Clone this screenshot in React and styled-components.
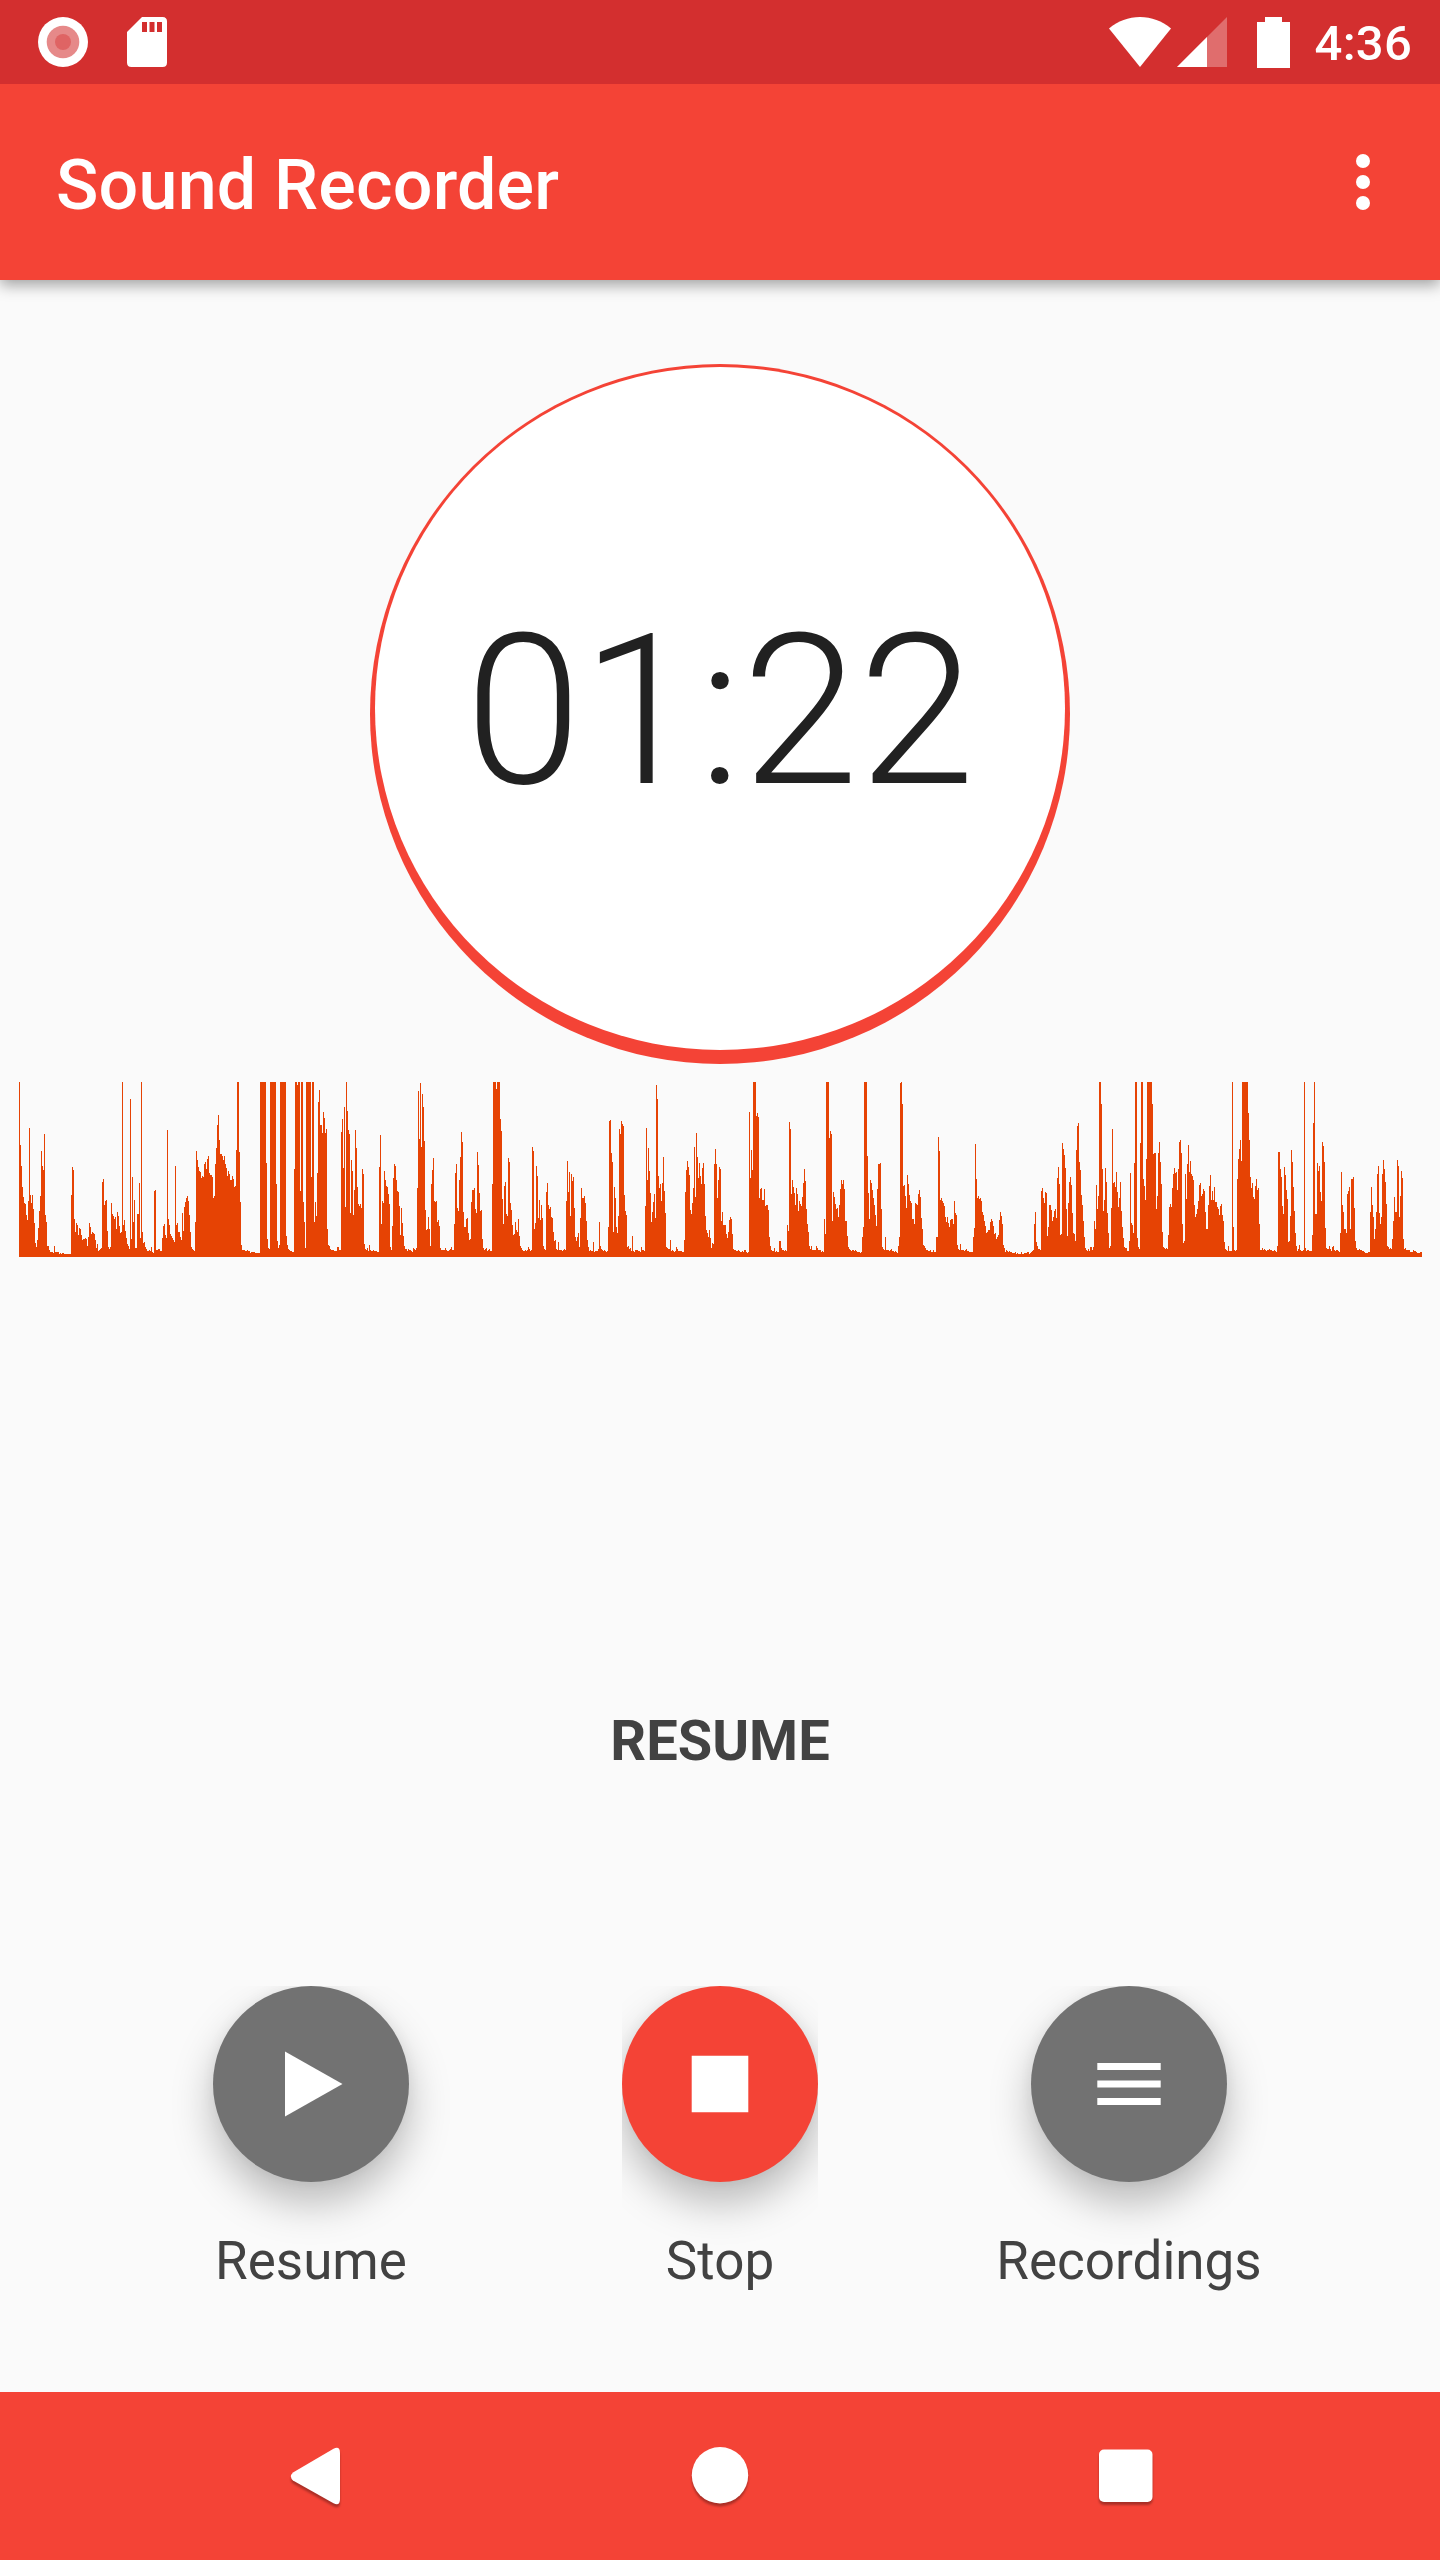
import React from 'react';
import styled, { createGlobalStyle } from 'styled-components';

const GlobalStyle = createGlobalStyle`
  * {
    box-sizing: border-box;
  }

  body {
    margin: 0;
    background: #fafafa;
    font-family: Roboto, sans-serif;
  }
`;

const Screen = styled.div`
  display: flex;
  flex-direction: column;
  width: 1440px;
  height: 2560px;
  overflow: hidden;
  background: #fafafa;
`;

const StatusBar = styled.div`
  position: relative;
  z-index: 1;
  display: flex;
  align-items: center;
  justify-content: space-between;
  height: 84px;
  padding: 0 28px 0 38px;
  background: #d32f2f;
`;

const StatusGroup = styled.div`
  display: flex;
  align-items: center;
  gap: ${p => p.$gap || 0}px;
`;

const Icon = styled.svg`
  display: block;
  flex: 0 0 auto;
  width: ${p => p.$w}px;
  height: ${p => p.$h}px;
  fill: #fff;
  overflow: visible;
`;

const Clock = styled.span`
  margin-left: 25px;
  padding-top: 4px;
  color: #fff;
  font-size: 49px;
  font-weight: 500;
  line-height: 60px;
  letter-spacing: 0.25px;
`;

const AppBar = styled.header`
  display: flex;
  align-items: center;
  justify-content: space-between;
  height: 196px;
  padding: 0 70px 0 56px;
  background: #f44336;
  box-shadow: 0 5px 14px rgba(0, 0, 0, 0.36);
`;

const Title = styled.h1`
  margin: 0;
  padding-top: 6px;
  color: #fff;
  font-size: 70px;
  font-weight: 500;
  line-height: 84px;
  letter-spacing: 0.2px;
`;

const MenuButton = styled.button`
  width: 14px;
  padding: 0;
  border: 0;
  background: none;
`;

const Main = styled.main`
  display: flex;
  flex: 1;
  flex-direction: column;
  align-items: center;
  padding-top: 84px;
`;

const Ring = styled.div`
  width: 700px;
  height: 700px;
  padding: 3px 5px 14px;
  border-radius: 50%;
  background: #f44336;
`;

const Dial = styled.div`
  display: flex;
  align-items: center;
  justify-content: center;
  width: 100%;
  height: 100%;
  padding-top: 5px;
  border-radius: 50%;
  background: #fff;
`;

const Timer = styled.span`
  color: #212121;
  font-size: 210px;
  font-weight: 300;
  line-height: 240px;
`;

const Wave = styled.svg`
  display: block;
  width: 1403px;
  height: 175px;
  margin: 18px 0 0 1px;
  fill: #e64304;
`;

const StateLabel = styled.div`
  margin-top: 452px;
  color: #424242;
  font-size: 56px;
  font-weight: 700;
  line-height: 64px;
`;

const Controls = styled.div`
  display: grid;
  grid-template-columns: repeat(3, 409px);
  margin-top: 213px;
`;

const Control = styled.div`
  display: flex;
  flex-direction: column;
  align-items: center;
`;

/* Keeps the shadow from spilling over the top edge, and the sides when $tight */
const ShadowBox = styled.div`
  clip-path: inset(0 ${p => (p.$tight ? 0 : -80)}px -100px);
`;

const RoundButton = styled.button`
  display: flex;
  align-items: center;
  justify-content: center;
  width: 196px;
  height: 196px;
  padding: 0;
  border: 0;
  border-radius: 50%;
  background: ${p => p.$color};
  box-shadow: 0 21px 42px rgba(0, 0, 0, 0.26), 0 0 14px rgba(0, 0, 0, 0.05);
`;

const ControlLabel = styled.span`
  margin-top: 48px;
  color: #424242;
  font-size: 53px;
  line-height: 62px;
`;

const NavBar = styled.nav`
  display: flex;
  align-items: center;
  justify-content: space-between;
  height: 168px;
  padding: 0 287px 0 290px;
  background: #f44336;
`;

const NavIcon = styled(Icon)`
  filter: drop-shadow(0 3px 1px rgba(0, 0, 0, 0.3));
`;

// Level blocks: start column, then one height per column ("175x3" repeats it)
const LEVELS = [
  [0, '175 112 91 70 60 54 53 42 37 56 129 62 54 62 48 34 14 10 17 29 46 61 106 91 87 123 42 35 11x2 7 5x3 4 11 5x4 3 4 3 4x2 3x7'],
  [52, '62 90 87 38 25 34 32 22 29 28 22 17 18x2 19 18 11 20 34 30 23 25 24 23 17 9 13 6 7 8 9'],
  [83, '75 78 52 56 57 26 10 8 10 54 43 41 38 40 28 45 41 31 24 25 175 32 37 26 19 13 11 8 158 18 80 35 57 9x2 43x2 74 19 175 25 14 15 10 8 6x2 7 6 10 5 4'],
  [135, '66 67 7x2 8x2 6x2 19 31 33 22 19 127 38 32 23 21 19 17 15 91 32 34 25x2 20 17 44 26 50 55 59 61 56 42 25 10 8 7 6 35'],
  [177, '106 97 90 86 85 79 81 80 93 95 88 98 101 84 82x2 80 59 61 93 109 132 142 117 103x2 101 97 101 93 89 81 86 83 77x2 81 78 70 71 107 175x2 105 55 12 7x3 6x2 7 6x2 4 5x4 4x5'],
  [241, '175x6 94 18 9 8 175x6 73 16 9 12 175x6 21 12 8 7 6x2 5x2 88 175x2 172 175x2 66 175x2 55 35 9 175x5 80 175x2 35 55 41 84 155 167 132x2 124 145 139 124 128 28 12 11 8 7x3 6x3 10x2 7x2'],
  [322, '125 138 89 150 50 175 146 127 123 44 97 86 42 67 127 109 70 53 51'],
  [341, '53 49 88 83 13 8 7 9 6 12 7 6x2 7 6x3 5x2 90 122 33 56 54 86 77 71 70 63 53 10 7 31 79 93 91 77 66 65 51 22 49 34 21 11 8x2 6 8 7x2 6 5 9 8 7 9'],
  [398, '69 166 118 174 110 163 150 116 47 27 28 40 28 11 73 87 99 56 55 56 35 37 31 9 7x4 9 7 6x2 7 8 10 7x2 33 84 93 49 46 77 100 125 115 45 30x2 38 39 24 17 18 55 67x2 69 48 44 105 92 64 46 47 18 9 7 8 9 6 7 8 6x2'],
  [473, '73 175x3 168 175x3 138 126 58 33 71 75 43 41 99 95 54 47 32 22 23 35 27 25 38 21 11 9 7 6x2 7 6 7 10 8 6 7 110 106 28 34 91 81 39 57 37 52 39 11 8 7 65 74 52 48 50 40 39 25 16 17 8 7 15 7x3 6 7 8 7'],
  [547, '56 96 65 85 41 83 76 80 49 20 16 20 24 10 39 69 59x2 61 54 36 17 10 6 7 6x2 15 5 6x3 8 35 11 8 7 6 7 6 5 6 30 136 137 104 95 25 70 59 30 24 41 128 123 136 133 131 62 46 42 10 11 8 9 6 21 6 5 7x3 6x2 5 10 7x2 6'],
  [626, '51 129 77 109 86 64 35 45 55 63 39 172 158 81 69 73 56 74 100 66 44 10 9 8x2 17 6 7 6 5 6 10 8 6x4 5x2 17 65 87 96 90 82 47 43 54 69 110 60 124 100 79 94 81 73 89 94 73 41 27 24 20 27 19 9 14 13 93 108 93 59 77 90'],
  [701, '88 36 45 32x3 23 19 25 37 40 38 23 8 7x2 6x2 7 6 5x2 6 5 7x2 5 4 5 145 79 107 87 175x3 141 144 140 59 68 69 57x2 68 51 52x2 47 20 11 7 6x2 9 5 6 5x2 16x2 9 7x2 6 7 6'],
  [768, '32 26 135 128 63 77 70 64 52 69 63 46 56 53 51 60 74 88 76 48 33 25 11 8 11 7x4 11 9 7x3 5 6 5 38 23 175x3 119 126 123 36 65 60 53 48 49 40 52 68 77 73 77 68 36x2 21 10 8 7 6 7x2 6 7 6 5x3 4 5'],
  [843, '20 30 175x3 101 64 38 77 74 67 59 52 42 31 68 93x2 94 48 10 8 7 20 7x3 6 7 8 6x2 5 6 5 4 11 20 174 175 153 71 72 61 49 82 73 62 56 54 38x2 33 54 53 52 63 67 60 39 28 12 11 9 7x2 6x2 7 5x2 7 5x2'],
  [917, '20x2 120 106 57 59 56 54 51 40 35 40 34 30 37 38x2 33 56 44 42 12 8 7 13 7x3 6 7 8 6x2 5x4 20 29 113 78 59 61 58 59 56 45 42 36 31 24 25 27x2 35 38 36 31 23 24 18 20 22 37 45 41 33 12 9 5 7 6 5 6 5x2 4x3 5 3 4 3x3 5 3x2 4x3 5x2 3 4 5 6 7'],
  [1015, '33 45 15 11 8x2 7 66 69 59 54 65 64 21 30 52x2 47 36 40 46 48 39 79 90 73 22 23 114 108 102 89 48 21 54 75'],
  [1051, '80 72 44 24 23 16 107 131 134 95 87 62 52 36 20 9 7 6 8 6 10x2 7 10 36 28 72 48 61 175x2 153 88 46 57 89 75 44 24 9 11 49 128 74 75 70 85 65 50 59 75 46 30 19 10 9x2 6x2'],
  [1110, '16 84 34 32 24 94 175x2 19 10 8 114 175x2 78 71 57 98 175x5 153 103 104x2 48 61 104 115 95 73 25 10 9 8 9 8 22 50 53 50 69 83 89 84 85 67 88 115 117 104 33 14 16 83 58 93 112 85 96 83 81 77 52 40 43 48 56 72 74 61 63 68 66 45 28x2'],
  [1189, '52 71 82 57 66 57 70 55x2 50 48 42 51 53 42 36 15 8 7 6 11 6x3 175 30 7 6 7 78 98 108 117 96 175x6 144 117 80 69 74 60 58 71 78 67 69 33 7x2 9 7 8 7 6 7x2 8 7x2 6x2 7 6 5 11'],
  [1259, '105x2 88 80 51 43 90 82 67 58 15 16 41 107 95 70 46 24 11 6 8 12 7 6x2 7 175 9 6 7x2 6x3 22 134 175 43x2 94 86 91 65 56 115 111 95 29 9 8x2 11 8 6 10 11 7 6 7x2 6 5'],
  [1321, '24 85 52 45 28x2 24 63 66 70 28 78x2 80 49 16 9 7x2 8 7x2 6x2 5 4x3 5x2 45 70 52 40 18 28 45 83 91 44 33 40 83 97 88 75 53 11 10 8 9 8 18 36 60 45x2 97 91 40 61 86 79 18 8 9 7x4 5x3 7 6x2 5 4x3 5x2'],
];

const wavePath = LEVELS.map(([start, levels]) => {
  let x = start;
  const steps = levels.split(' ').map(item => {
    const [height, count = 1] = item.split('x').map(Number);
    x += count;
    return `V${175 - height}H${x}`;
  });
  return `M${start} 175${steps.join('')}V175Z`;
}).join('');

const CONTROLS = [
  {
    label: 'Resume',
    color: '#727272',
    icon: (
      <Icon $w={196} $h={196} viewBox="0 0 196 196">
        <path d="M72 65.5 129.5 98 72 130.5Z" />
      </Icon>
    ),
  },
  {
    label: 'Stop',
    color: '#f44336',
    tight: true,
    icon: (
      <Icon $w={196} $h={196} viewBox="0 0 196 196">
        <path d="M69.7 69.8H126.3V126.3H69.7Z" />
      </Icon>
    ),
  },
  {
    label: 'Recordings',
    color: '#727272',
    icon: (
      <Icon $w={196} $h={196} viewBox="0 0 196 196">
        <path d="M66.3 77H129.7V84H66.3ZM66.3 94.5H129.7V101.5H66.3ZM66.3 112H129.7V119H66.3Z" />
      </Icon>
    ),
  },
];

export default function App() {
  return (
    <>
      <GlobalStyle />
      <Screen>
        <StatusBar>
          <StatusGroup $gap={39}>
            <Icon $w={50} $h={50} viewBox="0 0 50 50">
              <circle cx="25" cy="25" r="25" />
              <circle cx="25" cy="25" r="16.3" fill="#e68989" />
              <circle cx="25" cy="25" r="8" fill="#df6464" />
            </Icon>
            <Icon $w={40} $h={50} viewBox="0 0 40 50">
              <path d="M15 0H35.5Q40 0 40 4.5V45.5Q40 50 35.5 50H4.5Q0 50 0 45.5V15Z" />
              <path fill="#d32f2f" d="M15 5H20V15H15ZM22.5 5H27.5V15H22.5ZM30 5H35V15H30Z" />
            </Icon>
          </StatusGroup>
          <StatusGroup>
            <Icon $w={62} $h={50} viewBox="0 0 62 50">
              <path d="M0 11.5C9 4 19.5 0 31 0S53 4 62 11.5L31 50Z" />
            </Icon>
            <Icon $w={62} $h={50} viewBox="-6 0 62 50">
              <path fillOpacity="0.3" d="M50 0V50H0Z" />
              <path d="M30 20V50H0Z" />
            </Icon>
            <Icon $w={57} $h={51} viewBox="-24 0 57 51">
              <path d="M8 0H25V5H33V51H0V5H8Z" />
            </Icon>
            <Clock>4:36</Clock>
          </StatusGroup>
        </StatusBar>

        <AppBar>
          <Title>Sound Recorder</Title>
          <MenuButton aria-label="More options">
            <Icon $w={14} $h={56} viewBox="0 0 14 56">
              <circle cx="7" cy="7" r="7" />
              <circle cx="7" cy="28" r="7" />
              <circle cx="7" cy="49" r="7" />
            </Icon>
          </MenuButton>
        </AppBar>

        <Main>
          <Ring>
            <Dial>
              <Timer>01:22</Timer>
            </Dial>
          </Ring>

          <Wave viewBox="0 0 1403 175" shapeRendering="crispEdges">
            <path d={wavePath} />
          </Wave>

          <StateLabel>RESUME</StateLabel>

          <Controls>
            {CONTROLS.map(({ label, color, tight, icon }) => (
              <Control key={label}>
                <ShadowBox $tight={tight}>
                  <RoundButton $color={color} aria-label={label}>
                    {icon}
                  </RoundButton>
                </ShadowBox>
                <ControlLabel>{label}</ControlLabel>
              </Control>
            ))}
          </Controls>
        </Main>

        <NavBar>
          <NavIcon $w={50} $h={58} viewBox="0 0 50 58">
            <path d="M3 25.5 43.5 1.7Q50 -1.5 50 6V52Q50 59.5 43.5 56.3L3 33.5Q-1.2 29.5 3 25.5Z" />
          </NavIcon>
          <NavIcon $w={56} $h={58} viewBox="0 0 56 58">
            <circle cx="28" cy="28.3" r="28.2" />
          </NavIcon>
          <NavIcon $w={54} $h={54} viewBox="0 0 54 54">
            <rect x="0" y="0.5" width="53.5" height="52.5" rx="5" />
          </NavIcon>
        </NavBar>
      </Screen>
    </>
  );
}
